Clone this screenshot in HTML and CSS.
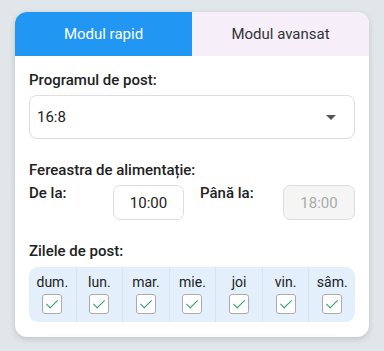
FILE: index.html
```html
<!DOCTYPE html>
<html lang="ro">
<head>
    <meta charset="UTF-8">
    <meta name="viewport" content="width=device-width, initial-scale=1.0">
    <title>Post intermitent</title>
    <link rel="stylesheet" href="styles.css">
</head>
<body>
    <div class="card">
        <div class="tabs">
            <button class="tab active">Modul rapid</button>
            <button class="tab">Modul avansat</button>
        </div>
        <div class="panel">
            <div class="label">Programul de post:</div>
            <div class="select">
                <span>16:8</span>
                <span class="arrow"></span>
            </div>

            <div class="label section">Fereastra de alimentație:</div>
            <div class="window">
                <div class="label">De la:</div>
                <input type="text" class="time" value="10:00">
                <div class="label until">Până la:</div>
                <input type="text" class="time" value="18:00" disabled>
            </div>

            <div class="label section">Zilele de post:</div>
            <div class="days">
                <label class="day">dum.<span class="check"></span></label>
                <label class="day">lun.<span class="check"></span></label>
                <label class="day">mar.<span class="check"></span></label>
                <label class="day">mie.<span class="check"></span></label>
                <label class="day">joi<span class="check"></span></label>
                <label class="day">vin.<span class="check"></span></label>
                <label class="day">sâm.<span class="check"></span></label>
            </div>
        </div>
    </div>
</body>
</html>
```

FILE: styles.css
```css
body {
    margin: 0;
    padding: 12px 15px;
    font-family: Roboto, "Noto Sans", sans-serif;
    color: #222;
    background-color: #e0e6ea;
}
.card {
    border-radius: 12px;
    overflow: hidden;
    background-color: #ffffff;
    box-shadow: 0px 2px 6px rgba(0, 0, 0, 0.15);
}
.tabs {
    display: flex;
    height: 44px;
}
.tab {
    flex: 1;
    border: none;
    font-family: inherit;
    font-size: 15px;
    color: #333;
    background-color: #f6eff9;
}
.tab.active {
    color: white;
    background-color: #2196f3;
}
.panel {
    padding: 14px 14px 15px 14px;
}
.label {
    font-size: 15px;
    font-weight: 500;
    line-height: 20px;
}
.label.section {
    margin-top: 21px;
}
.select {
    display: flex;
    align-items: center;
    justify-content: space-between;
    height: 44px;
    margin-top: 5px;
    padding: 0 18px 0 7px;
    font-size: 15px;
    border: 1px solid #ddd;
    border-radius: 8px;
    box-sizing: border-box;
}
.arrow {
    width: 0;
    height: 0;
    border-left: 5px solid transparent;
    border-right: 5px solid transparent;
    border-top: 5px solid #555;
}
.window {
    display: grid;
    grid-template-columns: 84px 71px 1fr 72px;
    align-items: start;
    margin-top: 3px;
}
.window .label {
    margin-top: 0;
}
.window .until {
    padding-left: 16px;
}
.time {
    height: 35px;
    margin-top: 2px;
    padding: 0;
    font-family: inherit;
    font-size: 15px;
    text-align: center;
    color: #222;
    border: 1px solid #ddd;
    border-radius: 7px;
    box-sizing: border-box;
    background-color: #fff;
}
.time:disabled {
    color: #aaa;
    background-color: #f5f5f5;
}
.days {
    display: grid;
    grid-template-columns: repeat(7, 1fr);
    height: 55px;
    margin-top: 6px;
    border-radius: 9px;
    background-color: #e3f0fb;
}
.day {
    display: flex;
    flex-direction: column;
    align-items: center;
    gap: 3px;
    padding-top: 7px;
    font-size: 14px;
    line-height: 17px;
    border-left: 1px solid #d3e3f0;
}
.day:first-child {
    border-left: none;
}
.check {
    position: relative;
    width: 20px;
    height: 20px;
    border: 1px solid #aaa;
    border-radius: 3px;
    box-sizing: border-box;
    background-color: #fff;
}
.check::after {
    content: "";
    position: absolute;
    left: 6px;
    top: 2px;
    width: 5px;
    height: 10px;
    border-right: 1.5px solid #2a9d6a;
    border-bottom: 1.5px solid #2a9d6a;
    transform: rotate(45deg);
}
```
